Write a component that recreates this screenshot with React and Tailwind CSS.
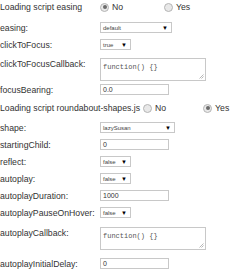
import React from 'react';

const Radio = ({ checked, label, className = '' }) => (
  <label className={`flex items-center ${className}`}>
    <span className="w-[9px] h-[9px] rounded-full border border-[#b5b5b5] bg-[#e8e8e8] flex items-center justify-center">
      {checked && <span className="w-[4px] h-[4px] rounded-full bg-[#6b6b6b]" />}
    </span>
    <span className="ml-[3px]">{label}</span>
  </label>
);

const Select = ({ value, width }) => (
  <div className={`${width} h-[11px] border border-[#c8c8c8] bg-white flex items-center justify-between pl-[2px] pr-[3px]`}>
    <span className="text-[6px] text-[#444]">{value}</span>
    <span className="text-[6px] text-black">▼</span>
  </div>
);

const Input = ({ value }) => (
  <div className="w-[69px] h-[11px] border border-[#c8c8c8] bg-white flex items-center pl-[2px]">
    <span className="text-[7px] text-[#333]">{value}</span>
  </div>
);

const TextArea = () => (
  <div className="relative w-[106px] h-[23px] border border-[#c8c8c8] bg-white pl-[2px] pt-[2px]">
    <span className="text-[7px] text-[#555] font-['Liberation_Mono',monospace]">function() {'{}'}</span>
    <svg className="absolute right-[1px] bottom-[1px]" width="5" height="5" viewBox="0 0 5 5">
      <path d="M4.5 0.5 L0.5 4.5 M4.5 2.5 L2.5 4.5" stroke="#999" strokeWidth="0.7" />
    </svg>
  </div>
);

const Row = ({ label, children, className = '' }) => (
  <div className={`flex items-center ${className}`}>
    <div className="w-[100px] shrink-0">{label}</div>
    {children}
  </div>
);

export default function App() {
  return (
    <div className="w-[250px] h-[274px] bg-white text-[#333] text-[8.7px] leading-[10px] font-['Liberation_Sans',Arial,sans-serif] overflow-hidden">
      <div className="flex items-center h-[14px]">
        <span className="w-[100px] shrink-0">Loading script easing</span>
        <Radio checked label="No" className="w-[64px]" />
        <Radio label="Yes" />
      </div>
      <Row label="easing:" className="mt-[8px]"><Select value="default" width="w-[72px]" /></Row>
      <Row label="clickToFocus:" className="mt-[6px]"><Select value="true" width="w-[31px]" /></Row>
      <div className="flex items-start mt-[8px]">
        <div className="w-[100px] shrink-0 pt-[1px]">clickToFocusCallback:</div>
        <TextArea />
      </div>
      <Row label="focusBearing:" className="mt-[3px]"><Input value="0.0" /></Row>
      <div className="flex items-center h-[14px] mt-[6px]">
        <span className="shrink-0">Loading script roundabout-shapes.js</span>
        <Radio label="No" className="ml-[3px] w-[60px]" />
        <Radio checked label="Yes" />
      </div>
      <Row label="shape:" className="mt-[7px]"><Select value="lazySusan" width="w-[75px]" /></Row>
      <Row label="startingChild:" className="mt-[6px]"><Input value="0" /></Row>
      <Row label="reflect:" className="mt-[6px]"><Select value="false" width="w-[31px]" /></Row>
      <Row label="autoplay:" className="mt-[6px]"><Select value="false" width="w-[31px]" /></Row>
      <Row label="autoplayDuration:" className="mt-[6px]"><Input value="1000" /></Row>
      <Row label="autoplayPauseOnHover:" className="mt-[6px]"><Select value="false" width="w-[31px]" /></Row>
      <div className="flex items-start mt-[9px]">
        <div className="w-[100px] shrink-0 pt-[1px]">autoplayCallback:</div>
        <TextArea />
      </div>
      <Row label="autoplayInitialDelay:" className="mt-[8px]"><Input value="0" /></Row>
    </div>
  );
}
